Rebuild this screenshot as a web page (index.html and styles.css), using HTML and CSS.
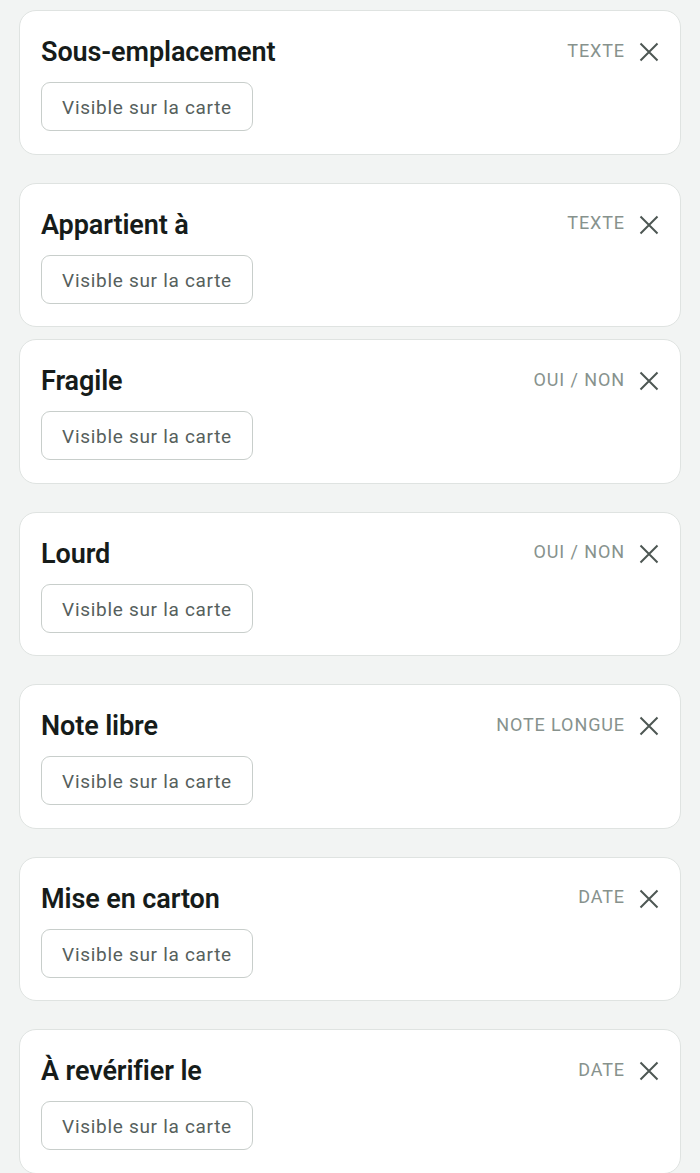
FILE: index.html
```html
<!DOCTYPE html>
<html lang="fr">
<head>
<meta charset="utf-8">
<link rel="stylesheet" href="styles.css">
</head>
<body>
<div class="list">
  <div class="card">
    <div class="head"><span class="title">Sous-emplacement</span><span class="tag">TEXTE</span><svg class="close" viewBox="0 0 20 20"><path d="M1.5 1.5L18.5 18.5M18.5 1.5L1.5 18.5"/></svg></div>
    <button class="chip">Visible sur la carte</button>
  </div>
  <div class="card">
    <div class="head"><span class="title">Appartient à</span><span class="tag">TEXTE</span><svg class="close" viewBox="0 0 20 20"><path d="M1.5 1.5L18.5 18.5M18.5 1.5L1.5 18.5"/></svg></div>
    <button class="chip">Visible sur la carte</button>
  </div>
  <div class="card card--close">
    <div class="head"><span class="title">Fragile</span><span class="tag">OUI / NON</span><svg class="close" viewBox="0 0 20 20"><path d="M1.5 1.5L18.5 18.5M18.5 1.5L1.5 18.5"/></svg></div>
    <button class="chip">Visible sur la carte</button>
  </div>
  <div class="card">
    <div class="head"><span class="title">Lourd</span><span class="tag">OUI / NON</span><svg class="close" viewBox="0 0 20 20"><path d="M1.5 1.5L18.5 18.5M18.5 1.5L1.5 18.5"/></svg></div>
    <button class="chip">Visible sur la carte</button>
  </div>
  <div class="card">
    <div class="head"><span class="title">Note libre</span><span class="tag">NOTE LONGUE</span><svg class="close" viewBox="0 0 20 20"><path d="M1.5 1.5L18.5 18.5M18.5 1.5L1.5 18.5"/></svg></div>
    <button class="chip">Visible sur la carte</button>
  </div>
  <div class="card">
    <div class="head"><span class="title">Mise en carton</span><span class="tag">DATE</span><svg class="close" viewBox="0 0 20 20"><path d="M1.5 1.5L18.5 18.5M18.5 1.5L1.5 18.5"/></svg></div>
    <button class="chip">Visible sur la carte</button>
  </div>
  <div class="card">
    <div class="head"><span class="title">À revérifier le</span><span class="tag">DATE</span><svg class="close" viewBox="0 0 20 20"><path d="M1.5 1.5L18.5 18.5M18.5 1.5L1.5 18.5"/></svg></div>
    <button class="chip">Visible sur la carte</button>
  </div>
</div>
</body>
</html>
```

FILE: styles.css
```css
html, body {
  margin: 0;
  padding: 0;
  background: #f2f4f3;
  font-family: Roboto, "Liberation Sans", sans-serif;
}
.list {
  display: flex;
  flex-direction: column;
  gap: 28px;
  padding: 10px 19px 0 19px;
}
.card {
  background: #fff;
  border: 1px solid #dfe3e1;
  border-radius: 17px;
  padding: 27px 21px 22.5px 21px;
  display: flex;
  flex-direction: column;
  align-items: flex-start;
  gap: 16px;
}
.card--close {
  margin-top: -16px;
}
.head {
  display: flex;
  align-items: center;
  width: 100%;
  height: 28px;
}
.title {
  flex: 1;
  font-size: 27px;
  font-weight: 600;
  color: #161c1a;
  letter-spacing: -0.1px;
}
.tag {
  font-size: 18px;
  letter-spacing: 0.9px;
  color: #87928d;
  margin-right: 14px;
  margin-top: -4px;
}
.close {
  width: 20px;
  height: 20px;
  fill: none;
  stroke: #4d5753;
  stroke-width: 2;
}
.chip {
  height: 49px;
  width: 212px;
  background: #fff;
  border: 1.5px solid #c8cecb;
  border-radius: 9px;
  font-family: Roboto, "Liberation Sans", sans-serif;
  font-size: 19px;
  letter-spacing: 0.7px;
  color: #56605c;
  padding: 2px 0 0 0;
}
```
